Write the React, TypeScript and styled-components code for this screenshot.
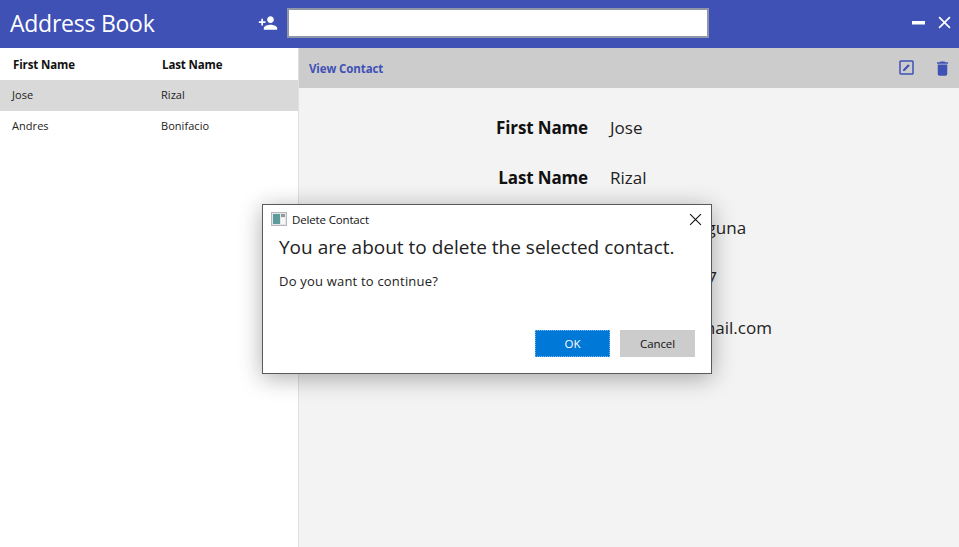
import React from 'react';
import styled, { createGlobalStyle } from 'styled-components';
import { MdPersonAdd, MdDelete } from 'react-icons/md';

const GlobalStyle = createGlobalStyle`
  html, body {
    margin: 0;
    padding: 0;
    height: 100%;
    background: #fff;
    overflow: hidden;
  }
  body {
    font-family: "Open Sans", "Noto Sans", sans-serif;
    color: #111;
  }
`;

const Page = styled.div`
  position: relative;
  width: 959px;
  height: 547px;
  display: flex;
  flex-direction: column;
  overflow: hidden;
`;

const TitleBar = styled.header`
  box-sizing: border-box;
  height: 48px;
  flex: none;
  background: #3f51b5;
  color: #fff;
  display: flex;
  align-items: center;
  padding: 0 8px 2px 10px;
`;

const AppTitle = styled.h1`
  width: 248px;
  margin: 0;
  font-size: 23px;
  font-weight: 400;
  letter-spacing: -0.25px;
  white-space: nowrap;
`;

const AddButton = styled.span`
  width: 29px;
  display: flex;
  align-items: center;
  font-size: 20px;
`;

const SearchInput = styled.input`
  box-sizing: border-box;
  width: 422px;
  height: 30px;
  border: 2px solid #8f96a8;
  background: #fff;
  outline: none;
  padding: 0 4px;
`;

const WindowButtons = styled.div`
  margin-left: auto;
  margin-bottom: 1px;
  display: flex;
  align-items: center;
  gap: 13px;
`;

const Body = styled.div`
  flex: 1;
  display: flex;
  min-height: 0;
`;

const ListPane = styled.section`
  width: 298px;
  flex: none;
  border-right: 1px solid #e0e0e0;
  background: #fff;
`;

const ListRow = styled.div<{ $head?: boolean; $selected?: boolean }>`
  box-sizing: border-box;
  display: grid;
  grid-template-columns: 149px 1fr;
  align-items: center;
  height: ${({ $head }) => ($head ? '32px' : '31px')};
  padding-left: ${({ $head }) => ($head ? '13px' : '12px')};
  padding-bottom: ${({ $head }) => ($head ? '0' : '2px')};
  font-size: ${({ $head }) => ($head ? '11.5px' : '11px')};
  font-weight: ${({ $head }) => ($head ? 700 : 400)};
  letter-spacing: ${({ $head }) => ($head ? '-0.12px' : '0.05px')};
  color: ${({ $head }) => ($head ? '#111' : '#222')};
  background: ${({ $selected }) => ($selected ? '#d9d9d9' : 'transparent')};
`;

const DetailPane = styled.section`
  flex: 1;
  display: flex;
  flex-direction: column;
  background: #f3f3f3;
`;

const DetailBar = styled.div`
  height: 40px;
  flex: none;
  background: #cccccc;
  display: flex;
  align-items: center;
  padding: 0 7px 0 10px;
`;

const DetailHeading = styled.span`
  font-size: 11.5px;
  font-weight: 700;
  letter-spacing: -0.1px;
  color: #3f51b5;
`;

const BarActions = styled.div`
  margin-left: auto;
  display: flex;
  align-items: center;
  gap: 18px;
  color: #3f51b5;
`;

const Fields = styled.dl`
  margin: 0;
  padding-top: 14px;
  display: grid;
  grid-template-columns: 289px 1fr;
  column-gap: 22px;
  grid-auto-rows: 50px;
  align-items: center;
`;

const FieldLabel = styled.dt`
  margin: 0;
  text-align: right;
  font-size: 17px;
  font-weight: 700;
  letter-spacing: -0.14px;
  color: #111;
`;

const FieldValue = styled.dd`
  margin: 0;
  font-size: 17px;
  color: #222;
`;

const Dialog = styled.div`
  position: absolute;
  left: 262px;
  top: 204px;
  box-sizing: border-box;
  width: 450px;
  height: 170px;
  background: #fff;
  border: 1px solid #5a5a5a;
  box-shadow: 0 4px 22px rgba(0, 0, 0, 0.32);
  display: flex;
  flex-direction: column;
`;

const DialogTitleBar = styled.div`
  height: 28px;
  flex: none;
  display: flex;
  align-items: center;
  gap: 5px;
  padding: 0 9px 0 8px;
  font-size: 11.5px;
  letter-spacing: -0.15px;
  color: #111;
`;

const DialogClose = styled.span`
  margin-left: auto;
  display: flex;
`;

const DialogBody = styled.div`
  flex: 1;
  display: flex;
  flex-direction: column;
  padding: 1px 16px 0;
`;

const DialogHeadline = styled.div`
  font-size: 19px;
  line-height: 26px;
  white-space: nowrap;
  color: #222;
`;

const DialogText = styled.p`
  margin: 12px 0 0;
  font-size: 13px;
  line-height: 18px;
  letter-spacing: 0.2px;
  color: #222;
`;

const DialogButtons = styled.div`
  margin-top: auto;
  padding-bottom: 16px;
  display: flex;
  justify-content: flex-end;
  gap: 10px;
`;

const DialogButton = styled.button<{ $primary?: boolean }>`
  box-sizing: border-box;
  width: 75px;
  height: 27px;
  padding: 0;
  font-family: inherit;
  font-size: 11.5px;
  letter-spacing: -0.1px;
  border: ${({ $primary }) => ($primary ? '1px dotted #7fb6ec' : 'none')};
  background: ${({ $primary }) => ($primary ? '#0078d7' : '#cccccc')};
  color: ${({ $primary }) => ($primary ? '#fff' : '#111')};
`;

const CONTACTS = [
  { first: 'Jose', last: 'Rizal' },
  { first: 'Andres', last: 'Bonifacio' },
];

const FIELDS = [
  ['First Name', 'Jose'],
  ['Last Name', 'Rizal'],
  ['Address', 'Calamba, Laguna'],
  ['Phone', '09123456787'],
  ['Email', 'joserizal@gmail.com'],
];

const CrossIcon = ({ size, stroke, width }: { size: number; stroke: string; width: number }) => (
  <svg width={size} height={size} viewBox="0 0 12 12">
    <path d="M1 1 L11 11 M11 1 L1 11" stroke={stroke} strokeWidth={width} fill="none" />
  </svg>
);

const MinimizeIcon = () => (
  <svg width="13" height="13" viewBox="0 0 13 13">
    <rect x="0" y="5" width="13" height="3.5" fill="#fff" />
  </svg>
);

const EditBoxIcon = () => (
  <svg width="16" height="16" viewBox="0 0 16 16">
    <rect x="1" y="1" width="13" height="13" rx="0.8" fill="none" stroke="currentColor" strokeWidth="1.5" />
    <path d="M4 11 V9.4 L9.2 4.2 L10.8 5.8 L5.6 11 Z" fill="currentColor" />
  </svg>
);

const WindowIcon = () => (
  <svg width="16" height="14" viewBox="0 0 16 14">
    <rect x="0.5" y="0.5" width="15" height="13" fill="#e4e6e8" stroke="#b4b8bc" />
    <rect x="2" y="2" width="7" height="10" fill="#5c9a9c" />
    <rect x="10" y="2" width="4" height="3" fill="#8f9da3" />
    <rect x="10" y="6" width="4" height="6" fill="#f6f6f6" />
  </svg>
);

const App: React.FC = () => {
  return (
    <Page>
      <GlobalStyle />
      <TitleBar>
        <AppTitle>Address Book</AppTitle>
        <AddButton>
          <MdPersonAdd />
        </AddButton>
        <SearchInput aria-label="Search" />
        <WindowButtons>
          <MinimizeIcon />
          <CrossIcon size={13} stroke="#fff" width={1.5} />
        </WindowButtons>
      </TitleBar>
      <Body>
        <ListPane>
          <ListRow $head>
            <span>First Name</span>
            <span>Last Name</span>
          </ListRow>
          {CONTACTS.map((c, i) => (
            <ListRow key={c.first} $selected={i === 0}>
              <span>{c.first}</span>
              <span>{c.last}</span>
            </ListRow>
          ))}
        </ListPane>
        <DetailPane>
          <DetailBar>
            <DetailHeading>View Contact</DetailHeading>
            <BarActions>
              <EditBoxIcon />
              <MdDelete size={19} />
            </BarActions>
          </DetailBar>
          <Fields>
            {FIELDS.map(([label, value]) => (
              <React.Fragment key={label}>
                <FieldLabel>{label}</FieldLabel>
                <FieldValue>{value}</FieldValue>
              </React.Fragment>
            ))}
          </Fields>
        </DetailPane>
      </Body>
      <Dialog>
        <DialogTitleBar>
          <WindowIcon />
          <span>Delete Contact</span>
          <DialogClose>
            <CrossIcon size={13} stroke="#111" width={1} />
          </DialogClose>
        </DialogTitleBar>
        <DialogBody>
          <DialogHeadline>You are about to delete the selected contact.</DialogHeadline>
          <DialogText>Do you want to continue?</DialogText>
          <DialogButtons>
            <DialogButton $primary>OK</DialogButton>
            <DialogButton>Cancel</DialogButton>
          </DialogButtons>
        </DialogBody>
      </Dialog>
    </Page>
  );
};

export default App;
